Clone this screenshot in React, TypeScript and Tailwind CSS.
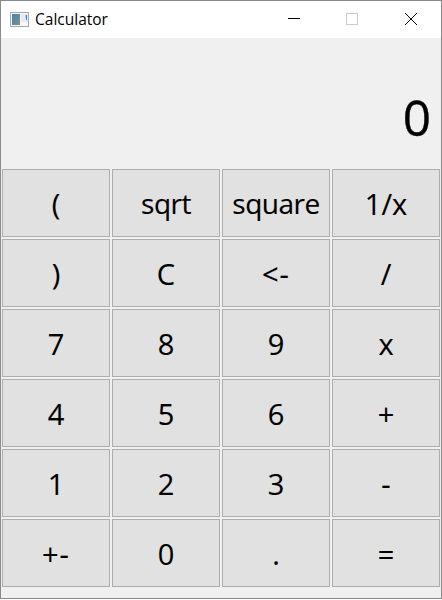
const keys = ['(', 'sqrt', 'square', '1/x', ')', 'C', '<-', '/', '7', '8', '9', 'x', '4', '5', '6', '+', '1', '2', '3', '-', '+-', '0', '.', '='];

const labelStyle = (key: string) => {
  if (key === 'sqrt' || key === 'square') return 'text-[28px] tracking-[-0.5px]';
  if (key === '<-' || key === '+-') return 'tracking-[1px]';
  return '';
};

export default function App() {
  return (
    <div className="h-[600px] w-[442px] bg-white">
      <div className="flex h-[599px] w-[442px] flex-col border border-[#8a8a8a] bg-[#f0f0f0] font-['Open_Sans','Noto_Sans',sans-serif] text-black">
        <header className="flex h-[37px] shrink-0 items-center bg-white pl-[9px]">
          <svg width="19" height="15" viewBox="0 0 19 15" shapeRendering="crispEdges">
            <defs>
              <linearGradient id="pane" x1="0" y1="0" x2="1" y2="1">
                <stop offset="0" stopColor="#3f83b5" />
                <stop offset=".5" stopColor="#66879a" />
                <stop offset="1" stopColor="#7c9488" />
              </linearGradient>
            </defs>
            <rect x=".5" y=".5" width="18" height="14" fill="#f6f8f9" stroke="#a2a8ab" />
            <rect x="2" y="2" width="8" height="11" fill="url(#pane)" />
            <rect x="11" y="2" width="7" height="8" fill="#e5ebef" />
            <rect x="16" y="3" width="1" height="5" fill="#3f86c6" />
            <rect x="15" y="3" width="1" height="3" fill="#a9cde9" />
          </svg>
          <span className="ml-[6px] text-[15.5px]">Calculator</span>
          <svg className="ml-auto" width="174" height="37" fill="none" shapeRendering="crispEdges">
            <path d="M21 17.5h12" stroke="#000" />
            <rect x="79.5" y="12.5" width="11" height="11" stroke="#ccc" />
            <path d="M138 12l12 12M150 12l-12 12" stroke="#000" shapeRendering="auto" />
          </svg>
        </header>
        <div className="flex h-[131px] shrink-0 items-center justify-end pr-[10px] pt-[28px] text-[49.5px] leading-none [-webkit-text-stroke:0.4px_#000]">0</div>
        <main className="grid shrink-0 grid-cols-4 gap-[2px] px-px">
          {keys.map((key) => (
            <button key={key} className="flex h-[68px] min-w-0 items-center justify-center border border-[#adadad] bg-[#e1e1e1] text-[29px] leading-none [-webkit-text-stroke:0.15px_#000]">
              <span className={labelStyle(key)}>{key}</span>
            </button>
          ))}
        </main>
      </div>
    </div>
  );
}
